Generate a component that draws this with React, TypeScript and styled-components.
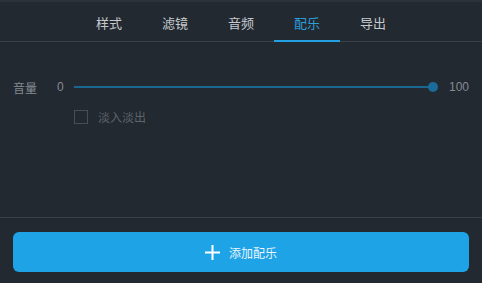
import React from "react";
import styled, { createGlobalStyle } from "styled-components";

const Global = createGlobalStyle`
  html, body { margin: 0; padding: 0; background: #232931; }
  body { font-family: "Noto Sans CJK SC", "Liberation Sans", sans-serif; }
`;

const Panel = styled.div`
  width: 482px;
  height: 283px;
  background: #232931;
  border-top: 2px solid #2c323b;
  box-sizing: border-box;
  display: flex;
  flex-direction: column;
`;

const TabBar = styled.div`
  display: flex;
  justify-content: center;
  height: 39px;
  border-bottom: 1px solid #39404a;
`;

const Tab = styled.div<{ $active?: boolean }>`
  width: 66px;
  display: flex;
  align-items: center;
  justify-content: center;
  font-size: 13px;
  color: ${(p) => (p.$active ? "#2b9fdc" : "#c5c9ce")};
  box-sizing: border-box;
  padding-top: 2px;
  border-bottom: 2px solid ${(p) => (p.$active ? "#23a0e3" : "transparent")};
  margin-bottom: -1px;
`;

const Body = styled.div`
  flex: 1;
  padding: 37px 13px 0 13px;
  border-bottom: 1px solid #39404a;
`;

const SliderRow = styled.div`
  display: flex;
  align-items: center;
  height: 16px;
  font-size: 12px;
  color: #858b93;
`;

const Label = styled.span`
  width: 44px;
`;

const Value = styled.span<{ $w: number; $align?: string }>`
  width: ${(p) => p.$w}px;
  text-align: ${(p) => p.$align || "left"};
  font-family: "Liberation Sans", sans-serif;
  font-size: 12px;
`;

const Track = styled.div`
  flex: 1;
  height: 2px;
  background: #1a6892;
  position: relative;
  margin: 0 11px 0 4px;
`;

const Thumb = styled.div`
  position: absolute;
  right: -5px;
  top: -4px;
  width: 10px;
  height: 10px;
  border-radius: 50%;
  background: #1a6b99;
`;

const CheckRow = styled.label`
  display: flex;
  align-items: center;
  gap: 10px;
  margin: 13px 0 0 61px;
  font-size: 12px;
  color: #5c636b;
`;

const Box = styled.span`
  width: 12px;
  height: 12px;
  border: 1px solid #474e57;
`;

const Footer = styled.div`
  height: 65px;
  padding: 14px 13px 0 13px;
  box-sizing: border-box;
`;

const AddButton = styled.button`
  width: 100%;
  height: 40px;
  border: none;
  border-radius: 6px;
  background: #1ea3e7;
  color: #eaf5fc;
  display: flex;
  align-items: center;
  justify-content: center;
  gap: 9px;
  font-family: "Noto Sans CJK SC", sans-serif;
  font-size: 12px;
  padding: 0;
`;

export default function App() {
  const tabs = ["样式", "滤镜", "音频", "配乐", "导出"];
  return (
    <>
      <Global />
      <Panel>
        <TabBar>
          {tabs.map((t) => (
            <Tab key={t} $active={t === "配乐"}>
              {t}
            </Tab>
          ))}
        </TabBar>
        <Body>
          <SliderRow>
            <Label>音量</Label>
            <Value $w={13}>0</Value>
            <Track>
              <Thumb />
            </Track>
            <Value $w={25} $align="right">100</Value>
          </SliderRow>
          <CheckRow>
            <Box />
            淡入淡出
          </CheckRow>
        </Body>
        <Footer>
          <AddButton>
            <svg width="15" height="15" viewBox="0 0 15 15">
              <path d="M7.5 0v15M0 7.5h15" stroke="#ffffff" strokeWidth="2" />
            </svg>
            添加配乐
          </AddButton>
        </Footer>
      </Panel>
    </>
  );
}
